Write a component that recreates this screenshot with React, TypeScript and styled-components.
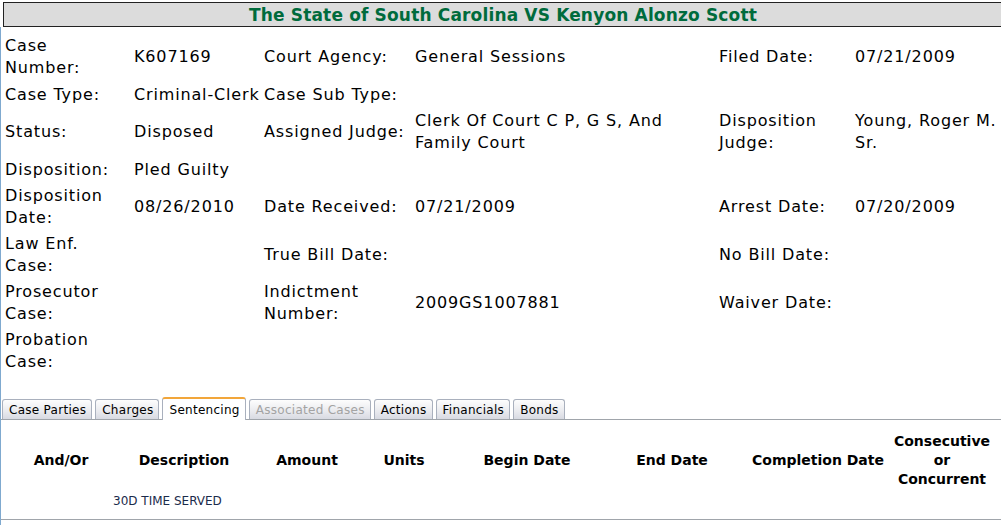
import React from "react";
import styled, { createGlobalStyle } from "styled-components";

const Global = createGlobalStyle`
  html, body { margin: 0; padding: 0; background: #fff; overflow: hidden; }
  body { font-family: "DejaVu Sans", Verdana, sans-serif; color: #000; }
`;

const Page = styled.div`
  width: 1001px;
  height: 525px;
  padding-top: 2px;
  box-sizing: border-box;
  overflow: hidden;
`;

const TitleBar = styled.div`
  margin-left: 3px;
  width: 1000px;
  height: 25px;
  box-sizing: border-box;
  border: 1px solid #222;
  background: #dcdcdc;
  display: flex;
  align-items: center;
  justify-content: center;
  padding-top: 1px;
`;

const Title = styled.h1`
  margin: 0;
  font-size: 17px;
  font-weight: bold;
  letter-spacing: 0.16px;
  color: #006b3c;
  white-space: nowrap;
`;

const Body = styled.div`
  border-left: 1px solid #7fa9cf;
  height: 498px;
  padding-top: 6px;
  box-sizing: border-box;
`;

const InfoGrid = styled.div`
  display: grid;
  grid-template-columns: 129px 130px 151px 304px 136px 1fr;
  grid-auto-rows: minmax(27px, auto);
  padding-left: 4px;
`;

const Cell = styled.div`
  font-size: 16px;
  letter-spacing: 0.85px;
  line-height: 22px;
  padding: 2px 0;
  white-space: pre;
  display: flex;
  align-items: center;
`;

const TabStrip = styled.div`
  margin-top: 21px;
  height: 23px;
  display: flex;
  align-items: flex-end;
  gap: 3px;
  padding-left: 1px;
  border-bottom: 1px solid #a0a5ab;
`;

const Tab = styled.div<{ $active?: boolean; $disabled?: boolean }>`
  height: ${(p) => (p.$active ? "23px" : "20px")};
  box-sizing: border-box;
  padding: 0 5px 0 6px;
  display: flex;
  align-items: center;
  font-size: 12px;
  letter-spacing: 0.28px;
  color: ${(p) => (p.$disabled ? "#a3a3a3" : "#000")};
  border: 1px solid #a9b0bd;
  border-bottom: none;
  border-top: ${(p) => (p.$active ? "2px solid #f2a63a" : "1px solid #a9b0bd")};
  border-radius: 3px 3px 0 0;
  background: ${(p) =>
    p.$active ? "#fff" : "linear-gradient(#fdfdfd, #e9eaee 60%, #d8dae2)"};
  margin-bottom: ${(p) => (p.$active ? "-1px" : "0")};
  white-space: nowrap;
`;

const SentenceTable = styled.div`
  border-bottom: 1px solid #a0a5ab;
  padding-top: 12px;
  padding-bottom: 10px;
`;

const SentRow = styled.div`
  display: grid;
  grid-template-columns: 120px 126px 120px 74px 172px 118px 174px 74px;
  align-items: center;
`;

const HeadCell = styled.div`
  font-size: 14px;
  font-weight: bold;
  line-height: 19px;
  text-align: center;
  white-space: pre;
  display: flex;
  justify-content: center;
`;

const DataCell = styled.div<{ $shift?: number }>`
  font-size: 12px;
  line-height: 16px;
  color: #1b2b4b;
  margin-top: 4px;
  margin-left: ${(p) => p.$shift ?? 0}px;
  white-space: nowrap;
`;

const rows: string[][] = [
  ["Case\nNumber:", "K607169", "Court Agency:", "General Sessions", "Filed Date:", "07/21/2009"],
  ["Case Type:", "Criminal-Clerk", "Case Sub Type:", "", "", ""],
  ["Status:", "Disposed", "Assigned Judge:", "Clerk Of Court C P, G S, And\nFamily Court", "Disposition\nJudge:", "Young, Roger M.\nSr."],
  ["Disposition:", "Pled Guilty", "", "", "", ""],
  ["Disposition\nDate:", "08/26/2010", "Date Received:", "07/21/2009", "Arrest Date:", "07/20/2009"],
  ["Law Enf.\nCase:", "", "True Bill Date:", "", "No Bill Date:", ""],
  ["Prosecutor\nCase:", "", "Indictment\nNumber:", "2009GS1007881", "Waiver Date:", ""],
  ["Probation\nCase:", "", "", "", "", ""],
];

const tabs = [
  { label: "Case Parties" },
  { label: "Charges" },
  { label: "Sentencing", active: true },
  { label: "Associated Cases", disabled: true },
  { label: "Actions" },
  { label: "Financials" },
  { label: "Bonds" },
];

const heads = [
  "And/Or",
  "Description",
  "Amount",
  "Units",
  "Begin Date",
  "End Date",
  "Completion Date",
  "Consecutive\nor\nConcurrent",
];

export default function App() {
  return (
    <Page>
      <Global />
      <TitleBar>
        <Title>The State of South Carolina VS Kenyon Alonzo Scott</Title>
      </TitleBar>
      <Body>
        <InfoGrid>
          {rows.map((r, i) =>
            r.map((c, j) => <Cell key={`${i}-${j}`}>{c}</Cell>)
          )}
        </InfoGrid>
        <TabStrip>
          {tabs.map((t) => (
            <Tab key={t.label} $active={t.active} $disabled={t.disabled}>
              {t.label}
            </Tab>
          ))}
        </TabStrip>
        <SentenceTable>
          <SentRow>
            {heads.map((h) => (
              <HeadCell key={h}>{h}</HeadCell>
            ))}
          </SentRow>
          <SentRow>
            <DataCell />
            <DataCell $shift={-8}>30D TIME SERVED</DataCell>
          </SentRow>
        </SentenceTable>
      </Body>
    </Page>
  );
}
